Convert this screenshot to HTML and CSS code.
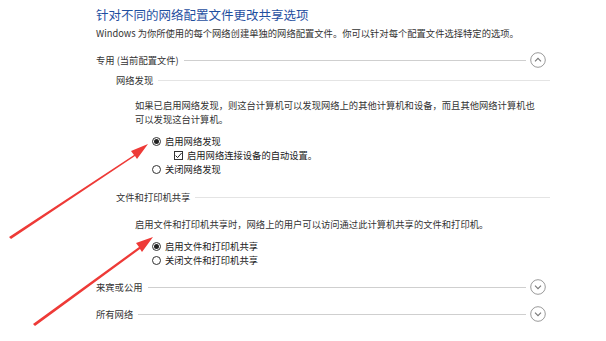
FILE: index.html
```html
<!DOCTYPE html>
<html lang="zh-CN">
<head>
    <meta charset="UTF-8">
    <meta name="viewport" content="width=device-width, initial-scale=1.0">
    <title>高级共享设置</title>
    <link rel="stylesheet" href="styles.css">
</head>
<body>
    <main class="page">
        <h1 class="title">针对不同的网络配置文件更改共享选项</h1>
        <p class="intro">Windows 为你所使用的每个网络创建单独的网络配置文件。你可以针对每个配置文件选择特定的选项。</p>

        <div class="profile profile-open">
            <span class="profile-name">专用 (当前配置文件)</span>
            <span class="rule"></span>
            <span class="toggle">
                <svg viewBox="0 0 16 16" width="16" height="16"><circle cx="8" cy="8" r="7.3" fill="none" stroke="#9a9a9a" stroke-width="1"/><path d="M5 9.3 L8 6.3 L11 9.3" fill="none" stroke="#777" stroke-width="1.1"/></svg>
            </span>
        </div>

        <section class="group">
            <div class="group-head">
                <span>网络发现</span>
                <span class="rule rule-light"></span>
            </div>
            <p class="group-text">如果已启用网络发现，则这台计算机可以发现网络上的其他计算机和设备，而且其他网络计算机也可以发现这台计算机。</p>
            <div class="options">
                <label class="radio checked"><span class="dot"></span>启用网络发现</label>
                <label class="check"><span class="box"><svg viewBox="0 0 9 9" width="9" height="9"><path d="M1.6 4.6 L3.6 6.6 L7.6 2" fill="none" stroke="#222" stroke-width="1"/></svg></span>启用网络连接设备的自动设置。</label>
                <label class="radio"><span class="dot"></span>关闭网络发现</label>
            </div>
        </section>

        <section class="group group-files">
            <div class="group-head">
                <span>文件和打印机共享</span>
                <span class="rule rule-light"></span>
            </div>
            <p class="group-text group-text-files">启用文件和打印机共享时，网络上的用户可以访问通过此计算机共享的文件和打印机。</p>
            <div class="options">
                <label class="radio checked"><span class="dot"></span>启用文件和打印机共享</label>
                <label class="radio"><span class="dot"></span>关闭文件和打印机共享</label>
            </div>
        </section>

        <div class="profile profile-guest">
            <span class="profile-name">来宾或公用</span>
            <span class="rule"></span>
            <span class="toggle">
                <svg viewBox="0 0 16 16" width="16" height="16"><circle cx="8" cy="8" r="7.3" fill="none" stroke="#9a9a9a" stroke-width="1"/><path d="M5 6.7 L8 9.7 L11 6.7" fill="none" stroke="#777" stroke-width="1.1"/></svg>
            </span>
        </div>

        <div class="profile profile-all">
            <span class="profile-name">所有网络</span>
            <span class="rule"></span>
            <span class="toggle">
                <svg viewBox="0 0 16 16" width="16" height="16"><circle cx="8" cy="8" r="7.3" fill="none" stroke="#9a9a9a" stroke-width="1"/><path d="M5 6.7 L8 9.7 L11 6.7" fill="none" stroke="#777" stroke-width="1.1"/></svg>
            </span>
        </div>
    </main>

    <!-- 标注箭头 -->
    <svg class="arrows" viewBox="0 0 606 341" width="606" height="341">
        <g fill="#ee3a37">
            <path d="M9 237 L134 155 L131 151 L148 144 L137 159 L135 156 L11 239 Z"/>
            <path d="M33 324 L139 247 L136 243 L153 237 L142 252 L140 249 L35 326 Z"/>
        </g>
    </svg>
</body>
</html>
```

FILE: styles.css
```css
body {
    margin: 0;
    background: #ffffff;
    color: #222;
    font-family: "Noto Sans CJK SC", "Noto Sans", sans-serif;
    font-size: 9.3px;
}

.page {
    width: 454px;
    padding: 7px 0 0 96px;
}

.title {
    margin: 0;
    font-size: 12.5px;
    font-weight: normal;
    line-height: 16px;
    color: #1f4f9f;
}

.intro {
    margin: 3px 0 0;
    line-height: 14px;
    color: #333;
}

.profile {
    display: flex;
    align-items: center;
    height: 16px;
    width: 454px;
}

.profile-open {
    margin-top: 12px;
}

.profile-guest {
    margin-top: 12px;
}

.profile-all {
    margin-top: 11px;
}

.profile-name {
    white-space: nowrap;
    color: #333;
}

.rule {
    flex: 1;
    height: 1px;
    background: #cfcfcf;
    margin: 0 4px 0 5px;
}

.rule-light {
    background: #e4e4e4;
    margin-right: 0;
}

.toggle {
    display: flex;
    width: 16px;
    height: 16px;
    margin-right: 4px;
}

.group {
    padding-left: 20px;
    margin-top: 5px;
}

.group-files {
    margin-top: 14px;
}

.group-head {
    display: flex;
    align-items: center;
    height: 14px;
    color: #333;
}

.group-text {
    margin: 11px 0 0 19px;
    width: 403px;
    line-height: 14px;
    color: #333;
}

.group-text-files {
    margin-top: 13px;
}

.options {
    margin: 8px 0 0 36px;
    display: flex;
    flex-direction: column;
}

.radio,
.check {
    display: flex;
    align-items: center;
    height: 14px;
    color: #222;
}

.radio .dot {
    width: 9px;
    height: 9px;
    border: 1px solid #333;
    border-radius: 50%;
    margin-right: 4px;
    display: flex;
    align-items: center;
    justify-content: center;
    box-sizing: border-box;
}

.radio.checked .dot::after {
    content: "";
    width: 5px;
    height: 5px;
    border-radius: 50%;
    background: #222;
}

.check {
    padding-left: 22px;
}

.check .box {
    display: flex;
    width: 9px;
    height: 9px;
    border: 1px solid #333;
    margin-right: 4px;
    box-sizing: border-box;
    align-items: center;
    justify-content: center;
}

.check .box svg {
    flex: none;
}

.arrows {
    position: absolute;
    left: 0;
    top: 0;
    pointer-events: none;
}
```
